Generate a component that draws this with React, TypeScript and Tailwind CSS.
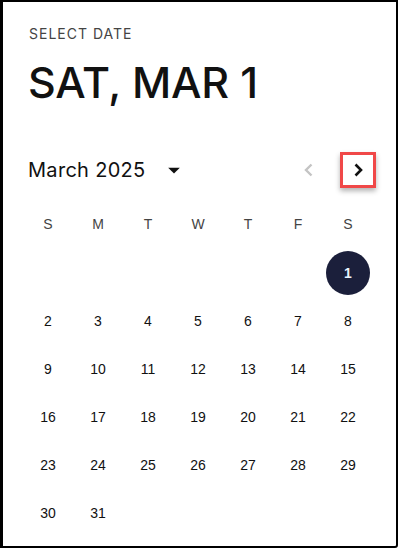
import React from "react";

const days: (number | null)[] = [
  null, null, null, null, null, null, 1,
  2, 3, 4, 5, 6, 7, 8,
  9, 10, 11, 12, 13, 14, 15,
  16, 17, 18, 19, 20, 21, 22,
  23, 24, 25, 26, 27, 28, 29,
  30, 31, null, null, null, null, null,
];

const weekdays = ["S", "M", "T", "W", "T", "F", "S"];

export default function App() {
  return (
    <div className="w-[398px] h-[548px] box-border border-2 border-l-[3px] border-black bg-white rounded-br-[3px] overflow-hidden">
      <div className="pt-[22px]">
        <div
          className="pl-[26px] text-[14px] leading-[20px] tracking-[1px] text-[#444]"
          style={{ fontFamily: "Inter, 'Liberation Sans', sans-serif" }}
        >
          SELECT DATE
        </div>
        <div
          className="pl-[25px] mt-[12px] text-[43px] leading-[52px] font-medium text-[#111] tracking-[-0.2px]"
          style={{ fontFamily: "Inter, 'Liberation Sans', sans-serif" }}
        >
          SAT, MAR 1
        </div>
        <div className="mt-[42px] h-[40px] flex items-center justify-between pl-[25px] pr-[20px]">
          <div className="flex items-center">
            <span
              className="text-[20px] leading-[28px] text-[#111] tracking-[0.3px]"
              style={{ fontFamily: "Inter, 'Liberation Sans', sans-serif" }}
            >
              March 2025
            </span>
            <svg viewBox="0 0 24 24" className="w-[28px] h-[28px] ml-[14px]" fill="#111">
              <path d="M7 10l5 5 5-5z" />
            </svg>
          </div>
          <div className="flex items-center gap-[13px]">
            <button className="w-[36px] h-[36px] flex items-center justify-center">
              <svg viewBox="0 0 24 24" className="w-[24px] h-[24px]" fill="none" stroke="#c4c4c4" strokeWidth="2.4">
                <path d="M14.5 6.5 9 12l5.5 5.5" />
              </svg>
            </button>
            <button className="w-[36px] h-[36px] flex items-center justify-center border-[3px] border-[#f04848] shadow-[0_3px_5px_rgba(0,0,0,0.3)] bg-white">
              <svg viewBox="0 0 24 24" className="w-[24px] h-[24px]" fill="none" stroke="#111" strokeWidth="2.6">
                <path d="M9.5 6.5 15 12l-5.5 5.5" />
              </svg>
            </button>
          </div>
        </div>
        <div
          className="mt-[14px] pl-[20px]"
          style={{ fontFamily: "'Liberation Sans', Arial, sans-serif" }}
        >
          <div className="grid grid-cols-[repeat(7,50px)] h-[40px] items-center">
            {weekdays.map((d, i) => (
              <div key={i} className="text-center text-[14px] text-[#444]">
                {d}
              </div>
            ))}
          </div>
          <div className="mt-[5px] grid grid-cols-[repeat(7,50px)] auto-rows-[48px]">
            {days.map((d, i) => (
              <div key={i} className="flex items-center justify-center">
                {d === 1 ? (
                  <div className="w-[44px] h-[44px] rounded-full bg-[#1b1f3b] flex items-center justify-center text-[14px] font-bold text-[#eaf4ff]">
                    1
                  </div>
                ) : d ? (
                  <span className="text-[14px] text-[#111]">{d}</span>
                ) : null}
              </div>
            ))}
          </div>
        </div>
      </div>
    </div>
  );
}
